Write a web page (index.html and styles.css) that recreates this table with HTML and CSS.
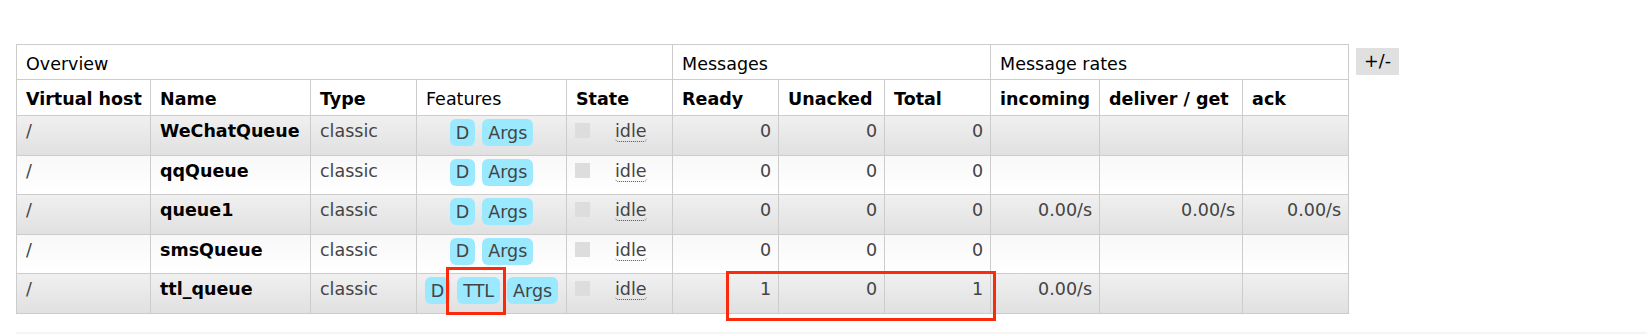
FILE: index.html
```html
<!DOCTYPE html>
<html lang="en">
<head>
    <meta charset="UTF-8">
    <meta name="viewport" content="width=device-width, initial-scale=1.0">
    <title>Queues</title>
    <link rel="stylesheet" href="styles.css">
</head>
<body>
    <div class="main">
        <div class="list-wrap">
            <table class="list">
                <colgroup>
                    <col class="w134">
                    <col class="w160">
                    <col class="w106">
                    <col class="w150">
                    <col class="w106">
                    <col class="w106">
                    <col class="w106">
                    <col class="w106">
                    <col class="w109">
                    <col class="w143">
                    <col class="w106">
                </colgroup>
                <thead>
                    <tr class="group">
                        <th colspan="5">Overview</th>
                        <th colspan="3">Messages</th>
                        <th colspan="3">Message rates</th>
                    </tr>
                    <tr>
                        <th>Virtual host</th>
                        <th>Name</th>
                        <th>Type</th>
                        <th class="plain">Features</th>
                        <th>State</th>
                        <th>Ready</th>
                        <th>Unacked</th>
                        <th>Total</th>
                        <th>incoming</th>
                        <th>deliver / get</th>
                        <th>ack</th>
                    </tr>
                </thead>
                <tbody>
                    <tr>
                        <td>/</td>
                        <td class="name">WeChatQueue</td>
                        <td>classic</td>
                        <td class="features"><div class="flags"><span class="badge">D</span><span class="badge">Args</span></div></td>
                        <td class="status"><span class="state"></span><span class="idle">idle</span></td>
                        <td class="num">0</td>
                        <td class="num">0</td>
                        <td class="num">0</td>
                        <td class="num"></td>
                        <td class="num"></td>
                        <td class="num"></td>
                    </tr>
                    <tr>
                        <td>/</td>
                        <td class="name">qqQueue</td>
                        <td>classic</td>
                        <td class="features"><div class="flags"><span class="badge">D</span><span class="badge">Args</span></div></td>
                        <td class="status"><span class="state"></span><span class="idle">idle</span></td>
                        <td class="num">0</td>
                        <td class="num">0</td>
                        <td class="num">0</td>
                        <td class="num"></td>
                        <td class="num"></td>
                        <td class="num"></td>
                    </tr>
                    <tr>
                        <td>/</td>
                        <td class="name">queue1</td>
                        <td>classic</td>
                        <td class="features"><div class="flags"><span class="badge">D</span><span class="badge">Args</span></div></td>
                        <td class="status"><span class="state"></span><span class="idle">idle</span></td>
                        <td class="num">0</td>
                        <td class="num">0</td>
                        <td class="num">0</td>
                        <td class="num">0.00/s</td>
                        <td class="num">0.00/s</td>
                        <td class="num">0.00/s</td>
                    </tr>
                    <tr>
                        <td>/</td>
                        <td class="name">smsQueue</td>
                        <td>classic</td>
                        <td class="features"><div class="flags"><span class="badge">D</span><span class="badge">Args</span></div></td>
                        <td class="status"><span class="state"></span><span class="idle">idle</span></td>
                        <td class="num">0</td>
                        <td class="num">0</td>
                        <td class="num">0</td>
                        <td class="num"></td>
                        <td class="num"></td>
                        <td class="num"></td>
                    </tr>
                    <tr>
                        <td>/</td>
                        <td class="name">ttl_queue</td>
                        <td>classic</td>
                        <td class="features"><div class="flags"><span class="badge">D</span><span class="badge">TTL</span><span class="badge">Args</span></div></td>
                        <td class="status"><span class="state"></span><span class="idle">idle</span></td>
                        <td class="num">1</td>
                        <td class="num">0</td>
                        <td class="num">1</td>
                        <td class="num">0.00/s</td>
                        <td class="num"></td>
                        <td class="num"></td>
                    </tr>
                </tbody>
            </table>
            <span class="toggle">+/-</span>
        </div>

        <!-- red highlight boxes drawn over the table -->
        <div class="mark mark-ttl"></div>
        <div class="mark mark-count"></div>

        <div class="next-section"></div>
    </div>
</body>
</html>
```

FILE: styles.css
```css
body {
    margin: 0;
    font-family: "DejaVu Sans", Verdana, sans-serif;
    font-size: 17.5px;
    line-height: 20px;
    color: #444;
    background-color: #fff;
}
.main {
    position: relative;
    padding: 44px 0 0 16px;
}
.list-wrap {
    display: flex;
    align-items: flex-start;
    gap: 7px;
}
table.list {
    border-collapse: collapse;
    table-layout: fixed;
    width: 1333px;
}
.w134 { width: 134px; }
.w160 { width: 160px; }
.w106 { width: 106px; }
.w150 { width: 150px; }
.w109 { width: 109px; }
.w143 { width: 143px; }

th, td {
    border: 1px solid #ccc;
    white-space: nowrap;
}
th {
    text-align: left;
    font-weight: bold;
    color: #000;
    padding: 9px 9px 6px;
    background-color: #fff;
}
tr.group th {
    font-weight: normal;
    padding-bottom: 5px;
}
th.plain {
    font-weight: normal;
}
td {
    padding: 5px 9px 13.5px;
    vertical-align: top;
}
tbody tr:nth-child(odd) {
    background: linear-gradient(#f0f0f0, #e0e0e0);
}
tbody tr:nth-child(even) {
    background: linear-gradient(#f8f8f8, #fff);
}
td.name {
    font-weight: bold;
    color: #000;
}
td.num {
    text-align: right;
    padding-right: 7px;
}
td.features {
    padding: 3px 0 0;
}
.flags {
    display: flex;
    justify-content: center;
    gap: 7px;
}
.badge {
    display: inline-flex;
    align-items: center;
    height: 27px;
    padding: 0 6px;
    border-radius: 6px;
    background-color: #9ae9ff;
    color: #444;
}
td.status {
    padding-left: 8px;
}
.state {
    display: inline-block;
    width: 15px;
    height: 15px;
    margin-right: 25px;
    vertical-align: -1px;
    background-color: #ddd;
}
.idle {
    border-bottom: 1px dotted #555;
    border-radius: 0 0 4px 4px;
}
.toggle {
    margin-top: 4px;
    height: 27px;
    line-height: 27px;
    padding: 0 8px;
    background-color: #e0e0e0;
    color: #000;
}
.mark {
    position: absolute;
    box-sizing: border-box;
    border: 3px solid #fa2a0c;
}
.mark-ttl {
    left: 446px;
    top: 267px;
    width: 60px;
    height: 48px;
}
.mark-count {
    left: 726px;
    top: 271px;
    width: 270px;
    height: 50px;
}
.next-section {
    margin-top: 18px;
    height: 10px;
    background-color: #f5f5f5;
}
```
